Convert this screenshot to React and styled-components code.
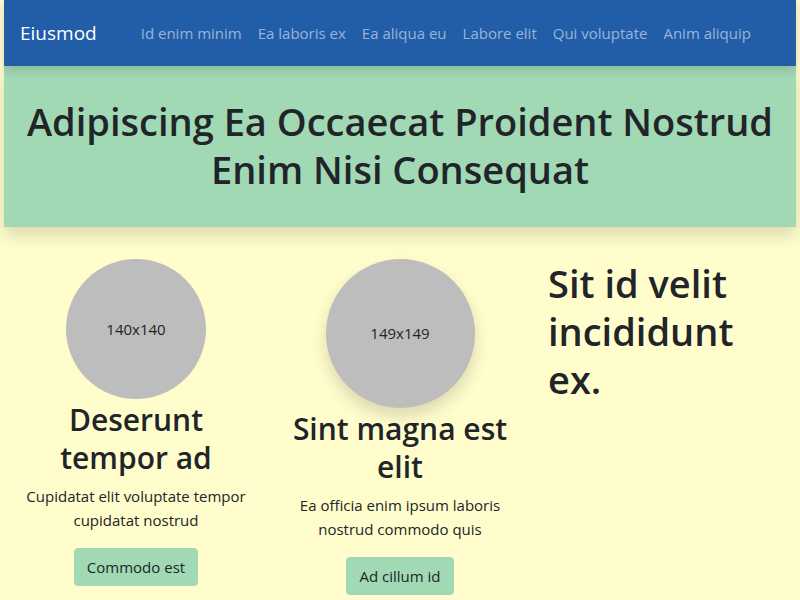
import React from "react";
import styled, { createGlobalStyle } from "styled-components";

const Global = createGlobalStyle`
  html, body { margin: 0; padding: 0; background: #fffdcc; }
  body {
    font-family: "Open Sans", "Noto Sans", sans-serif;
    color: #212529;
    font-size: 16px;
    line-height: 1.5;
  }
  * { box-sizing: border-box; }
`;

const Page = styled.div`
  padding: 0 4px;
  min-height: 600px;
`;

const Nav = styled.nav`
  position: relative;
  z-index: 2;
  height: 66px;
  background: #225da8;
  display: flex;
  align-items: center;
  padding: 0 16px;
  box-shadow: 0 4px 10px rgba(0, 0, 0, 0.15);
`;

const Brand = styled.a`
  color: #fff;
  font-size: 19px;
  margin-right: 36px;
  text-decoration: none;
`;

const NavList = styled.div`
  display: flex;
`;

const NavLink = styled.a`
  color: rgba(255, 255, 255, 0.55);
  font-size: 15px;
  padding: 8px 8px;
  text-decoration: none;
`;

const Hero = styled.header`
  position: relative;
  z-index: 1;
  background: #a1d9b5;
  padding: 31px 16px 34px;
  text-align: center;
  box-shadow: 0 8px 16px rgba(0, 0, 0, 0.15);
`;

const HeroTitle = styled.h1`
  margin: 0;
  font-size: 38px;
  font-weight: 600;
  line-height: 48px;
`;

const Columns = styled.main`
  display: grid;
  grid-template-columns: repeat(3, 1fr);
  padding-top: 32px;
`;

const Col = styled.section`
  padding: 0 16px;
  display: flex;
  flex-direction: column;
  align-items: ${(p) => (p.$left ? "flex-start" : "center")};
  text-align: ${(p) => (p.$left ? "left" : "center")};
`;

const Avatar = styled.div`
  width: ${(p) => p.$size}px;
  height: ${(p) => p.$size}px;
  border-radius: 50%;
  background: #bdbdbd;
  display: flex;
  align-items: center;
  justify-content: center;
  font-size: 15px;
  color: #212529;
  box-shadow: ${(p) => (p.$shadow ? "0 8px 16px rgba(0,0,0,0.15)" : "none")};
`;

const CardTitle = styled.h2`
  margin: 2px 0 7px;
  font-size: 30px;
  font-weight: 600;
  line-height: 38px;
`;

const Text = styled.p`
  margin: 0 0 16px;
  font-size: 15px;
  line-height: 24px;
`;

const Button = styled.button`
  font-family: inherit;
  font-size: 15px;
  line-height: 24px;
  color: #212529;
  background: #a1d9b5;
  border: 1px solid #a1d9b5;
  border-radius: 4px;
  padding: 6px 12px;
`;

const BigTitle = styled.h1`
  margin: 0;
  font-size: 38px;
  font-weight: 600;
  line-height: 48px;
`;

const links = [
  "Id enim minim",
  "Ea laboris ex",
  "Ea aliqua eu",
  "Labore elit",
  "Qui voluptate",
  "Anim aliquip",
];

export default function App() {
  return (
    <>
      <Global />
      <Page>
        <Nav>
          <Brand href="#">Eiusmod</Brand>
          <NavList>
            {links.map((l) => (
              <NavLink key={l} href="#">
                {l}
              </NavLink>
            ))}
          </NavList>
        </Nav>
        <Hero>
          <HeroTitle>
            Adipiscing Ea Occaecat Proident Nostrud Enim Nisi Consequat
          </HeroTitle>
        </Hero>
        <Columns>
          <Col>
            <Avatar $size={140}>140x140</Avatar>
            <CardTitle>Deserunt tempor ad</CardTitle>
            <Text>Cupidatat elit voluptate tempor cupidatat nostrud</Text>
            <Button>Commodo est</Button>
          </Col>
          <Col>
            <Avatar $size={149} $shadow>
              149x149
            </Avatar>
            <CardTitle>Sint magna est elit</CardTitle>
            <Text>Ea officia enim ipsum laboris nostrud commodo quis</Text>
            <Button>Ad cillum id</Button>
          </Col>
          <Col $left>
            <BigTitle>Sit id velit incididunt ex.</BigTitle>
          </Col>
        </Columns>
      </Page>
    </>
  );
}
